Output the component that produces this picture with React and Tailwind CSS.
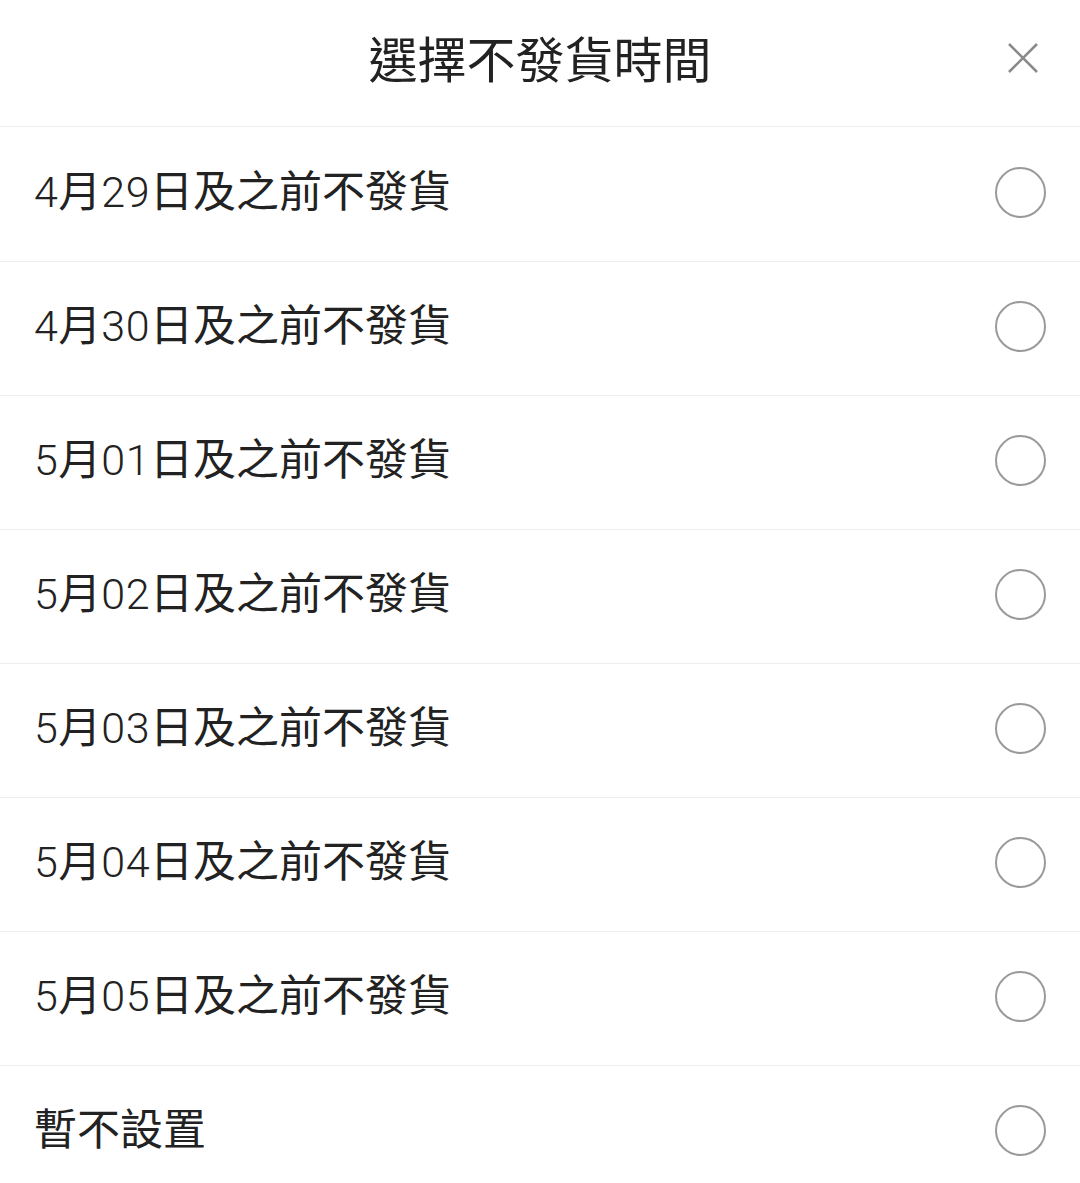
function Label({ text }) {
  const parts = text.split(/(\d+)/).filter(Boolean);
  return (
    <span className="text-[43px] leading-none pb-[4px]">
      {parts.map((p, i) =>
        /^\d+$/.test(p) ? (
          <span key={i} className="font-light tracking-[0.5px]">{p}</span>
        ) : (
          <span key={i} className="font-normal">{p}</span>
        )
      )}
    </span>
  );
}

export default function App() {
  const items = [
    "4月29日及之前不發貨",
    "4月30日及之前不發貨",
    "5月01日及之前不發貨",
    "5月02日及之前不發貨",
    "5月03日及之前不發貨",
    "5月04日及之前不發貨",
    "5月05日及之前不發貨",
    "暫不設置",
  ];
  return (
    <div
      className="w-[1080px] h-[1183px] overflow-hidden bg-white text-[#222222]"
      style={{ fontFamily: "Roboto, 'Noto Sans CJK TC', sans-serif" }}
    >
      <div className="relative h-[127px] border-b border-[#eeeeee] flex items-center justify-center">
        <span className="text-[49px] leading-none pb-[4px]">選擇不發貨時間</span>
        <svg
          className="absolute left-[1007px] top-[42px]"
          width="32"
          height="32"
          viewBox="0 0 32 32"
        >
          <path d="M2 2 L30 30 M30 2 L2 30" stroke="#8a8a8a" strokeWidth="2.6" fill="none" />
        </svg>
      </div>
      {items.map((t, i) => (
        <div
          key={t}
          className={`${i === 0 ? "h-[135px]" : "h-[134px]"} border-b border-[#eeeeee] flex items-center justify-between pl-[34px] pr-[34px]`}
        >
          <Label text={t} />
          <div className="w-[51px] h-[51px] rounded-full border-[2.5px] border-[#9a9a9a] mb-[4px]" />
        </div>
      ))}
    </div>
  );
}
